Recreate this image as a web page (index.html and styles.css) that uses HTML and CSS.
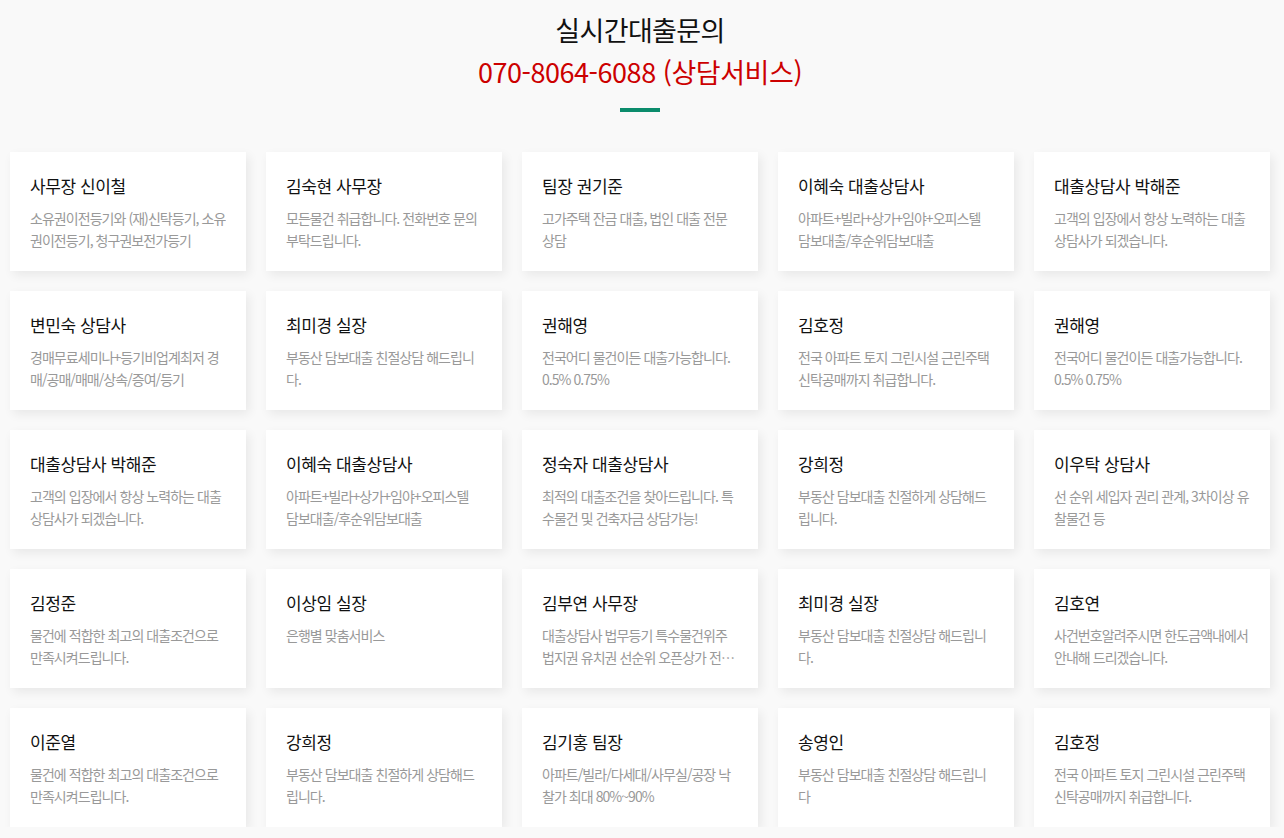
FILE: index.html
```html
<!DOCTYPE html>
<html lang="ko">
<head>
<meta charset="utf-8">
<title>실시간대출문의</title>
<link rel="stylesheet" href="styles.css">
</head>
<body>
<div class="page">
  <header class="head">
    <h1 class="head-title">실시간대출문의</h1>
    <p class="head-phone">070-8064-6088 (상담서비스)</p>
    <span class="head-bar"></span>
  </header>
  <section class="grid">
    <div class="card"><h2 class="card-title">사무장 신이철</h2><p class="card-desc">소유권이전등기와 (재)신탁등기, 소유권이전등기, 청구권보전가등기</p></div>
    <div class="card"><h2 class="card-title">김숙현 사무장</h2><p class="card-desc">모든물건 취급합니다. 전화번호 문의 부탁드립니다.</p></div>
    <div class="card"><h2 class="card-title">팀장 권기준</h2><p class="card-desc">고가주택 잔금 대출, 법인 대출 전문 상담</p></div>
    <div class="card"><h2 class="card-title">이혜숙 대출상담사</h2><p class="card-desc">아파트+빌라+상가+임야+오피스텔 담보대출/후순위담보대출</p></div>
    <div class="card"><h2 class="card-title">대출상담사 박해준</h2><p class="card-desc">고객의 입장에서 항상 노력하는 대출 상담사가 되겠습니다.</p></div>

    <div class="card"><h2 class="card-title">변민숙 상담사</h2><p class="card-desc">경매무료세미나+등기비업계최저 경매/공매/매매/상속/증여/등기</p></div>
    <div class="card"><h2 class="card-title">최미경 실장</h2><p class="card-desc">부동산 담보대출 친절상담 해드립니다.</p></div>
    <div class="card"><h2 class="card-title">권해영</h2><p class="card-desc">전국어디 물건이든 대출가능합니다. 0.5% 0.75%</p></div>
    <div class="card"><h2 class="card-title">김호정</h2><p class="card-desc">전국 아파트 토지 그린시설 근린주택 신탁공매까지 취급합니다.</p></div>
    <div class="card"><h2 class="card-title">권해영</h2><p class="card-desc">전국어디 물건이든 대출가능합니다. 0.5% 0.75%</p></div>

    <div class="card"><h2 class="card-title">대출상담사 박해준</h2><p class="card-desc">고객의 입장에서 항상 노력하는 대출 상담사가 되겠습니다.</p></div>
    <div class="card"><h2 class="card-title">이혜숙 대출상담사</h2><p class="card-desc">아파트+빌라+상가+임야+오피스텔 담보대출/후순위담보대출</p></div>
    <div class="card"><h2 class="card-title">정숙자 대출상담사</h2><p class="card-desc">최적의 대출조건을 찾아드립니다. 특수물건 및 건축자금 상담가능!</p></div>
    <div class="card"><h2 class="card-title">강희정</h2><p class="card-desc">부동산 담보대출 친절하게 상담해드립니다.</p></div>
    <div class="card"><h2 class="card-title">이우탁 상담사</h2><p class="card-desc">선 순위 세입자 권리 관계, 3차이상 유찰물건 등</p></div>

    <div class="card"><h2 class="card-title">김정준</h2><p class="card-desc">물건에 적합한 최고의 대출조건으로 만족시켜드립니다.</p></div>
    <div class="card"><h2 class="card-title">이상임 실장</h2><p class="card-desc">은행별 맞춤서비스</p></div>
    <div class="card"><h2 class="card-title">김부연 사무장</h2><p class="card-desc">대출상담사 법무등기 특수물건위주 법지권 유치권 선순위 오픈상가 전문 상담합니다</p></div>
    <div class="card"><h2 class="card-title">최미경 실장</h2><p class="card-desc">부동산 담보대출 친절상담 해드립니다.</p></div>
    <div class="card"><h2 class="card-title">김호연</h2><p class="card-desc">사건번호알려주시면 한도금액내에서 안내해 드리겠습니다.</p></div>

    <div class="card"><h2 class="card-title">이준열</h2><p class="card-desc">물건에 적합한 최고의 대출조건으로 만족시켜드립니다.</p></div>
    <div class="card"><h2 class="card-title">강희정</h2><p class="card-desc">부동산 담보대출 친절하게 상담해드립니다.</p></div>
    <div class="card"><h2 class="card-title">김기홍 팀장</h2><p class="card-desc">아파트/빌라/다세대/사무실/공장 낙찰가 최대 80%~90%</p></div>
    <div class="card"><h2 class="card-title">송영인</h2><p class="card-desc">부동산 담보대출 친절상담 해드립니다</p></div>
    <div class="card"><h2 class="card-title">김호정</h2><p class="card-desc">전국 아파트 토지 그린시설 근린주택 신탁공매까지 취급합니다.</p></div>
  </section>
</div>
</body>
</html>
```
FILE: styles.css
```css
* { box-sizing: border-box; }
html, body { margin: 0; padding: 0; }
body {
  background: #f9f9f9;
  font-family: "Noto Sans CJK KR", "Noto Sans", sans-serif;
  color: #111;
}
.page {
  width: 1264px;
  margin-left: 10px;
}
.head {
  display: flex;
  flex-direction: column;
  align-items: center;
  padding-top: 10px;
  padding-right: 4px;
}
.head-title {
  margin: 0;
  font-size: 27px;
  font-weight: 400;
  letter-spacing: -0.6px;
  line-height: 40px;
  color: #111;
}
.head-phone {
  margin: 2px 0 0;
  font-size: 27px;
  font-weight: 400;
  letter-spacing: -0.45px;
  line-height: 40px;
  color: #cc0000;
}
.head-bar {
  display: block;
  width: 40px;
  height: 4px;
  margin-top: 16px;
  background: #0b8c6c;
}
.grid {
  display: grid;
  grid-template-columns: repeat(5, 236px);
  column-gap: 20px;
  row-gap: 20px;
  margin-top: 40px;
}
.card {
  height: 119px;
  background: #fff;
  padding: 23px 20px 0;
  box-shadow: 3px 4px 10px rgba(0, 0, 0, 0.07);
}
.card-title {
  margin: 0;
  font-size: 17px;
  font-weight: 400;
  letter-spacing: -0.4px;
  line-height: 22px;
  color: #111;
}
.card-desc {
  margin: 10px 0 0;
  font-size: 14px;
  letter-spacing: -0.95px;
  line-height: 22px;
  color: #999;
  display: -webkit-box;
  -webkit-line-clamp: 2;
  -webkit-box-orient: vertical;
  overflow: hidden;
}
```
